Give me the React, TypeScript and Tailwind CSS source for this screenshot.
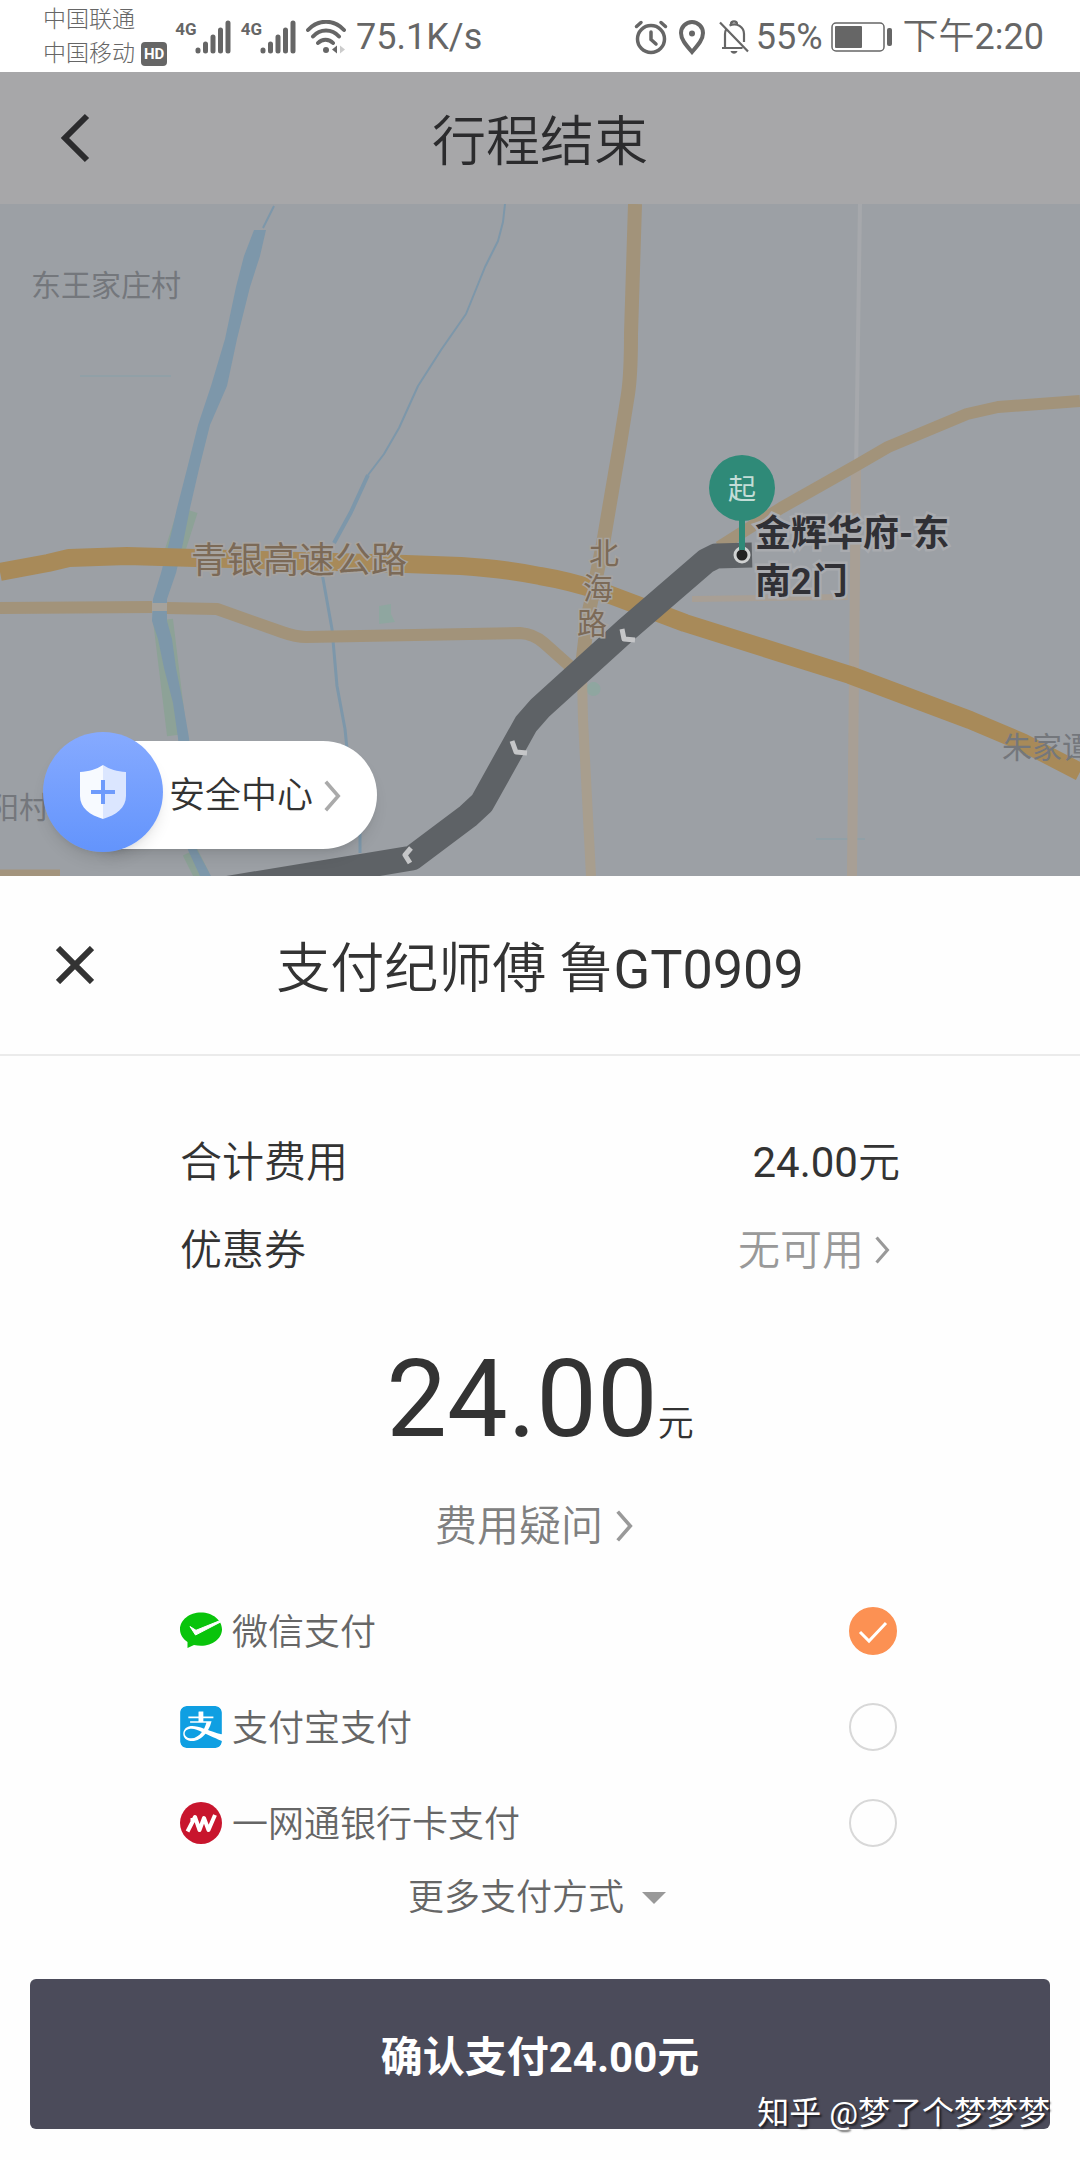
import React, { useState } from 'react';
import { SiAlipay } from 'react-icons/si';

interface PayMethod {
  id: string;
  label: string;
  icon: React.ReactNode;
}

const WechatIcon = () => (
  <svg viewBox="0 0 42 42" className="size-[42px]" aria-hidden="true">
    <path d="M21 2.500C9.400 2.500 0 10 0 19.300c0 5.200 3 9.800 7.500 12.700v6l6.500-3c2.300.6 4.600.8 7 .8 11.600 0 21-7.300 21-16.500S32.600 2.500 21 2.500z" fill="#09c40b" />
    <path d="M10 16.500l6 3.800 23-9.300 1 1.300L15.500 25z" fill="#fff" stroke="#fff" strokeLinejoin="round" />
  </svg>
);

const AlipayIcon = () => (
  <span className="block size-[42px] overflow-hidden rounded-md bg-white">
    <SiAlipay className="size-[42px] text-[#0f9fe2]" aria-hidden="true" />
  </span>
);

const MerchantsIcon = () => (
  <svg viewBox="0 0 42 42" className="size-[42px]" aria-hidden="true">
    <circle cx="21" cy="21" r="21" fill="#c8152d" />
    <g fill="none" stroke="#fff" strokeWidth="4" strokeLinejoin="round">
      <path d="M7.500 29.500L15 15l4.500 13L24 16l4.500 12L35 13" />
      <path d="M10.500 17.500h4" strokeWidth="3" />
    </g>
  </svg>
);

const METHODS: PayMethod[] = [
  { id: 'wechat', label: '微信支付', icon: <WechatIcon /> },
  { id: 'alipay', label: '支付宝支付', icon: <AlipayIcon /> },
  { id: 'cmb', label: '一网通银行卡支付', icon: <MerchantsIcon /> },
];

const ChevronRight = ({ className }: { className: string }) => (
  <svg viewBox="0 0 20 36" className={className} fill="none" stroke="currentColor" strokeWidth="4" aria-hidden="true">
    <path d="M3 2l14 16L3 34" />
  </svg>
);

const Signal = () => (
  <div className="flex items-start">
    <span className="text-[17px] leading-[18px] font-bold">4G</span>
    <svg viewBox="0 0 36 34" className="-ml-0.5 h-[34px] w-9" stroke="currentColor" strokeWidth="5" strokeLinecap="round" aria-hidden="true">
      <path d="M3 31v-1M10.500 31v-7M18 31V17M25.500 31V10M33 31V3" />
    </svg>
  </div>
);

const StatusBar = () => (
  <div className="flex h-[72px] items-center justify-between bg-white pt-0.5 pr-9 pl-[43px] text-[#666]">
    <div className="flex items-center">
      <div className="text-[23px] leading-[34px] font-light">
        <p>中国联通</p>
        <div className="flex items-center gap-1.5">
          中国移动
          <span className="rounded bg-[#666] px-[3px] text-[15px] leading-6 font-bold text-white">HD</span>
        </div>
      </div>
      <div className="ml-2 flex items-center gap-2.5">
        <Signal />
        <Signal />
        <svg viewBox="0 0 40 34" className="h-[34px] w-10" fill="none" stroke="currentColor" strokeWidth="4" strokeLinecap="round" aria-hidden="true">
          <path d="M2 10C12-1 28-1 38 10M7 16.500c7-8 19-8 26 0M12 23c4-4.500 11-4.500 15 0" />
          <circle cx="20" cy="30" r="3" fill="currentColor" stroke="none" />
          <path d="M26 29.500l5-4v8z" fill="currentColor" stroke="none" />
          <path d="M34 25.500l5 4-5 4z" fill="#ccc" stroke="none" />
        </svg>
        <span className="text-[36px] leading-10">75.1K/s</span>
      </div>
    </div>
    <div className="flex items-center">
      <svg viewBox="0 0 34 36" className="h-9 w-[34px]" fill="none" stroke="currentColor" strokeWidth="3.500" strokeLinecap="round" aria-hidden="true">
        <circle cx="17" cy="20" r="13.500" />
        <path d="M2.500 7.500l4.500-4M31.500 7.500l-4.500-4M17 13v7.500l5 4.500" />
      </svg>
      <svg viewBox="0 0 28 36" className="ml-2.5 h-9 w-7" fill="none" stroke="currentColor" strokeWidth="4" aria-hidden="true">
        <path d="M14 33C8 26 3 20.500 3 14a11 11 0 0 1 22 0c0 6.500-5 12-11 19z" />
        <circle cx="14" cy="14.500" r="3" fill="currentColor" stroke="none" />
      </svg>
      <svg viewBox="0 0 32 36" className="ml-3 h-9 w-8" fill="none" stroke="currentColor" strokeWidth="2.200" aria-hidden="true">
        <path d="M2 3.500l28 29M4 29h20.500M7 28V15c0-2 .5-3.500 1.300-5M11.500 6.500C19 3 26 8 26 15v8M13 5c0-3.500 6-3.500 6 0" />
        <path d="M12.500 32h7c-1 3.500-6 3.500-7 0z" fill="currentColor" stroke="none" />
      </svg>
      <span className="ml-1.5 text-[36px] leading-10">55%</span>
      <svg viewBox="0 0 62 30" className="ml-2 h-[30px] w-[62px]" aria-hidden="true">
        <rect x="1" y="1" width="52" height="28" rx="4" fill="none" stroke="currentColor" strokeWidth="1.500" />
        <rect x="4" y="4" width="27" height="22" rx="1" fill="currentColor" />
        <rect x="56" y="6" width="5" height="18" rx="2" fill="currentColor" />
      </svg>
      <span className="ml-2.5 text-[36px] leading-10">
        <span className="font-[350]">下午</span>2:20
      </span>
    </div>
  </div>
);

const TripMap = () => (
  <svg viewBox="0 204 1080 672" preserveAspectRatio="xMidYMid slice" className="block h-[672px] w-full bg-[#9ca0a5]" role="img" aria-label="行程路线">
    <g fill="none" strokeLinejoin="round">
      {/* Green belts and ponds */}
      <g stroke="#8da297" strokeWidth="20">
        <path d="M188 510L172 560M163 620l14 115" />
        <path d="M190 852l12 24" strokeWidth="16" />
      </g>
      <path d="M379 606l12-2v10l4 8-16 2zM593 682a7 7 0 1 0 1 0" fill="#8fa6a0" />

      {/* Rivers */}
      <g stroke="#7d97aa">
        <path d="M274 206l-11 22M505 204l-2 18-5 19-13 26-19 47-25 36-23 36-19 42-15 26-16 21" strokeWidth="2" />
        <path d="M368 475l-17 37-17 31" strokeWidth="4" />
        <path d="M322 573l10 56 5 57 8 43 2 20 13 84v20" strokeWidth="3" />
      </g>
      <path
        d="M254 230h12l-6 26-10 31-13 52-10 47-17 39-11 44-9 39-7 35-7 30-9 26v22l5 18 4 29 7 35 6 35 8 112 14 26h-11l-12-26-10-112-5-35-9-35-6-29-6-18 1-22 8-26 8-30 8-35 10-39 11-44 13-39 14-47 11-52 8-31z"
        fill="#7d97aa"
      />
      <path d="M80 376h91M816 839h49" stroke="#91a0a7" strokeWidth="2" />

      {/* Minor roads */}
      <path d="M860 204l-4 270" stroke="#a6a8ac" strokeWidth="4" />
      <path d="M856 469l-4 407" stroke="#a89f95" strokeWidth="10" />
      <path d="M692 599l156-2" stroke="#a89f95" strokeWidth="6" />
      <path d="M588 616l-6 61 1 43 8 156" stroke="#a89e8e" strokeWidth="10" />
      <path d="M0 873h60" stroke="#a3947d" strokeWidth="7" />

      {/* Secondary roads */}
      <g stroke="#a2937a" strokeWidth="12">
        <path d="M0 608l152-1" />
        <path d="M152 607h15" stroke="#a5a29c" strokeWidth="8" />
        <path d="M167 608l50 1 65 23q14 5 24 5l214-4q14 1 24 10l27 24" />
        <path d="M635 204l-4 130q0 40-3 60l-8 50-17 100-15 72-6 50" strokeWidth="14" />
        <path d="M719 547l62-39 76-43 31-18 79-33 31-7 82-6" />
      </g>

      {/* Expressway */}
      <path d="M0 572l48-9 21-5 58-2 279 8 55 2q45 3 79 10 30 5 60 15l85 32 165 52 120 45 52 22 58 30" stroke="#a88a59" strokeWidth="18" />

      {/* Route */}
      <path d="M752 555l-36 1-10 5-80 69-86 78-14 16-44 79-14 13L412 858 200 893" stroke="#5e6266" strokeWidth="25" />
      <g stroke="#c5c6c8" strokeWidth="5">
        <path d="M622 629l2 10 11 1M512 741l4 11 11 1M411 848l-6 7 5 8" />
      </g>

      {/* Start pin */}
      <circle cx="742" cy="555" r="7" fill="#222" stroke="#d0d2d2" strokeWidth="3" />
      <path d="M742 488v62" stroke="#2f8a78" strokeWidth="6" />
      <circle cx="742" cy="488" r="33" fill="#2f8a78" />
    </g>

    <g fill="#74777c" fontSize="30">
      <text x="31" y="296">东王家庄村</text>
      <text x="-11" y="818">阳村</text>
      <text x="1002" y="758">朱家谭</text>
    </g>
    <g fill="#7c6a57" stroke="#a7a4a0" strokeWidth="3" paintOrder="stroke">
      <text x="191" y="573" fontSize="36">青银高速公路</text>
      <g fontSize="30">
        <text x="589" y="564">北</text>
        <text x="583" y="599">海</text>
        <text x="577" y="634">路</text>
      </g>
    </g>
    <text x="742" y="499" fontSize="28" textAnchor="middle" fill="#c3ddd7">起</text>
    <g fill="#303035" stroke="#a9abaf" strokeWidth="5" paintOrder="stroke" fontSize="36" fontWeight="700">
      <text x="755" y="546">金辉华府-东</text>
      <text x="755" y="594">南2门</text>
    </g>
  </svg>
);

const SafetyCenterButton = () => (
  <button type="button" className="absolute bottom-6 left-[43px] flex h-[120px] items-end">
    <span className="relative z-10 flex size-[120px] items-center justify-center rounded-full bg-linear-to-b from-[#86aaff] to-[#6394fc] shadow-lg">
      <svg viewBox="0 0 46 54" className="h-[54px] w-[46px]" aria-hidden="true">
        <path d="M23 0c7 4.500 14 6.500 23 7v24c0 12-10 19-23 23z" fill="#dbe6ff" />
        <path d="M23 0C16 4.500 9 6.500 0 7v24c0 12 10 19 23 23z" fill="#f7faff" />
        <path d="M11 27h24M23 15v24" stroke="#6e9bfc" strokeWidth="4" />
      </svg>
    </span>
    <span className="mb-[3px] -ml-[60px] flex h-[108px] items-center rounded-r-full bg-white pt-0.5 pr-9 pl-[66px] text-[36px] font-[350] shadow-lg">
      安全中心
      <ChevronRight className="ml-2.5 h-8 w-[18px] text-[#aaa]" />
    </span>
  </button>
);

export default function App() {
  const [method, setMethod] = useState('wechat');

  return (
    <div className="flex min-h-screen flex-col overflow-x-hidden bg-[#fefefe] font-[Roboto,'Noto_Sans_CJK_SC',sans-serif] text-[#333]">
      <StatusBar />

      <header className="relative flex h-[132px] items-center justify-center bg-[#a7a7a9]">
        <button type="button" aria-label="返回" className="absolute left-[60px] text-[#2b2b2d]">
          <svg viewBox="0 0 30 50" className="h-[50px] w-[30px]" fill="none" stroke="currentColor" strokeWidth="6" aria-hidden="true">
            <path d="M27 3L5 25l22 22" />
          </svg>
        </button>
        <h1 className="pt-2.5 text-[54px] leading-[60px] font-[350] text-[#2b2b2d]">行程结束</h1>
      </header>

      <div className="relative">
        <TripMap />
        <SafetyCenterButton />
      </div>

      <section className="flex flex-col">
        <div className="relative flex h-[180px] items-center justify-center border-b-2 border-[#ebebeb]">
          <button type="button" aria-label="关闭" className="absolute left-14">
            <svg viewBox="0 0 38 38" className="size-[38px]" stroke="currentColor" strokeWidth="6" aria-hidden="true">
              <path d="M2 2l34 34M36 2L2 36" />
            </svg>
          </button>
          <h2 className="pt-2.5 text-[54px] leading-[60px] font-[350]">
            支付纪师傅 鲁<span className="font-normal">GT0909</span>
          </h2>
        </div>

        <div className="flex flex-col px-[180px] pt-[62px] font-[350]">
          <div className="flex h-[88px] items-center justify-between text-[42px]">
            <span>合计费用</span>
            <span>
              <span className="font-normal">24.00</span>元
            </span>
          </div>
          <div className="flex h-[88px] items-center justify-between text-[42px]">
            <span>优惠券</span>
            <button type="button" className="flex items-center text-[#999]">
              无可用
              <ChevronRight className="mx-2.5 h-7 w-4" />
            </button>
          </div>

          <p className="mt-[45px] text-center text-[108px] leading-[120px] font-normal">
            24.00<span className="text-[36px] leading-none font-[350]">元</span>
          </p>

          <button type="button" className="mt-10 flex h-[54px] items-center self-center text-[42px] text-[#808080]">
            费用疑问
            <ChevronRight className="mx-3 h-9 w-[18px] text-[#999]" />
          </button>

          <div role="radiogroup" aria-label="支付方式" className="mt-[30px]">
            {METHODS.map((m) => (
              <label key={m.id} className="flex h-24 cursor-pointer items-center text-[36px] text-[#666]">
                {m.icon}
                <span className="ml-2.5 flex-1 pt-1">{m.label}</span>
                <span className="relative mr-[3px] size-12">
                  <input
                    type="radio"
                    name="pay-method"
                    value={m.id}
                    checked={method === m.id}
                    onChange={() => setMethod(m.id)}
                    className="peer block size-12 appearance-none rounded-full border-2 border-[#d8d8d8] checked:border-[#fc9153] checked:bg-[#fc9153]"
                  />
                  <svg viewBox="0 0 48 48" className="pointer-events-none absolute inset-0 hidden size-12 peer-checked:block" fill="none" stroke="#fff" strokeWidth="3" aria-hidden="true">
                    <path d="M11 25l9 9 17-18" />
                  </svg>
                </span>
              </label>
            ))}
          </div>

          <button type="button" className="flex h-[54px] items-center self-center text-[36px] text-[#666]">
            更多支付方式
            <svg viewBox="0 0 24 12" className="mr-1.5 ml-[18px] h-3 w-6" fill="#999" aria-hidden="true">
              <path d="M0 0h24L12 12z" />
            </svg>
          </button>
        </div>

        <div className="relative mx-[30px] mt-[54px] mb-[30px]">
          <button type="button" className="block h-[150px] w-full rounded-md bg-[#4b4b5a] pt-1.5 text-[42px] font-bold text-white">
            确认支付24.00元
          </button>
          <span className="pointer-events-none absolute right-0 bottom-0 text-[32px] leading-8 text-white [text-shadow:2px_2px_2px_rgba(0,0,0,0.6)]">
            知乎 @梦了个梦梦梦
          </span>
        </div>
      </section>
    </div>
  );
}
